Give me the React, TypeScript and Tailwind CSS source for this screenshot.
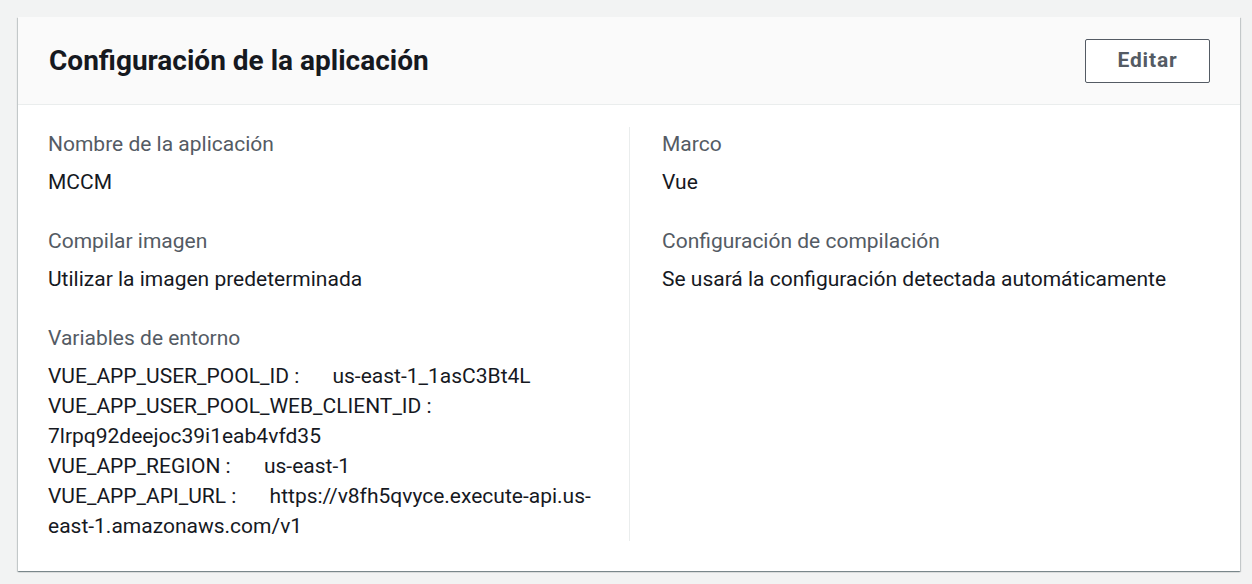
const envVars = [
  { key: "VUE_APP_USER_POOL_ID", value: "us-east-1_1asC3Bt4L" },
  { key: "VUE_APP_USER_POOL_WEB_CLIENT_ID", value: "7lrpq92deejoc39i1eab4vfd35" },
  { key: "VUE_APP_REGION", value: "us-east-1" },
  { key: "VUE_APP_API_URL", value: "https://v8fh5qvyce.execute-api.us-east-1.amazonaws.com/v1" },
];

function Field({ label, first, children }: { label: string; first?: boolean; children: React.ReactNode }) {
  return (
    <div className={first ? "" : "mt-[29px]"}>
      <div className="text-[21px] leading-[30px] text-[#545b64]">{label}</div>
      <div className="mt-[8px] text-[21px] leading-[30px] text-[#16191f]">{children}</div>
    </div>
  );
}

export default function App() {
  return (
    <div className="min-h-screen bg-[#f2f3f3] pt-[17px] pl-[18px] font-['Roboto',sans-serif]">
      <section className="w-[1222px] bg-white shadow-[0_1px_1px_0_rgba(0,28,36,0.3),1px_1px_1px_0_rgba(0,28,36,0.15),-1px_1px_1px_0_rgba(0,28,36,0.15)]">
        <header className="flex h-[88px] items-center justify-between border-b border-[#eaeded] bg-[#fafafa] pl-[31px] pr-[30px]">
          <h2 className="text-[28px] font-bold text-[#16191f]">Configuración de la aplicación</h2>
          <button
            type="button"
            className="h-[44px] w-[125px] rounded-[2px] border border-[#545b64] bg-white text-[21px] font-bold tracking-[0.8px] text-[#545b64]"
          >
            Editar
          </button>
        </header>

        <div className="grid grid-cols-2 px-[30px] pt-[22px] pb-[30px]">
          <div className="pt-[2px] pr-[20px]">
            <Field label="Nombre de la aplicación" first>
              MCCM
            </Field>
            <Field label="Compilar imagen">Utilizar la imagen predeterminada</Field>
            <Field label="Variables de entorno">
              {envVars.map((v) => (
                <div key={v.key}>
                  <span className="pr-[28px]">{v.key} : </span>
                  {v.value}
                </div>
              ))}
            </Field>
          </div>

          <div className="border-l border-[#eaeded] pt-[2px] pl-[32px]">
            <Field label="Marco" first>
              Vue
            </Field>
            <Field label="Configuración de compilación">
              Se usará la configuración detectada automáticamente
            </Field>
          </div>
        </div>
      </section>
    </div>
  );
}
